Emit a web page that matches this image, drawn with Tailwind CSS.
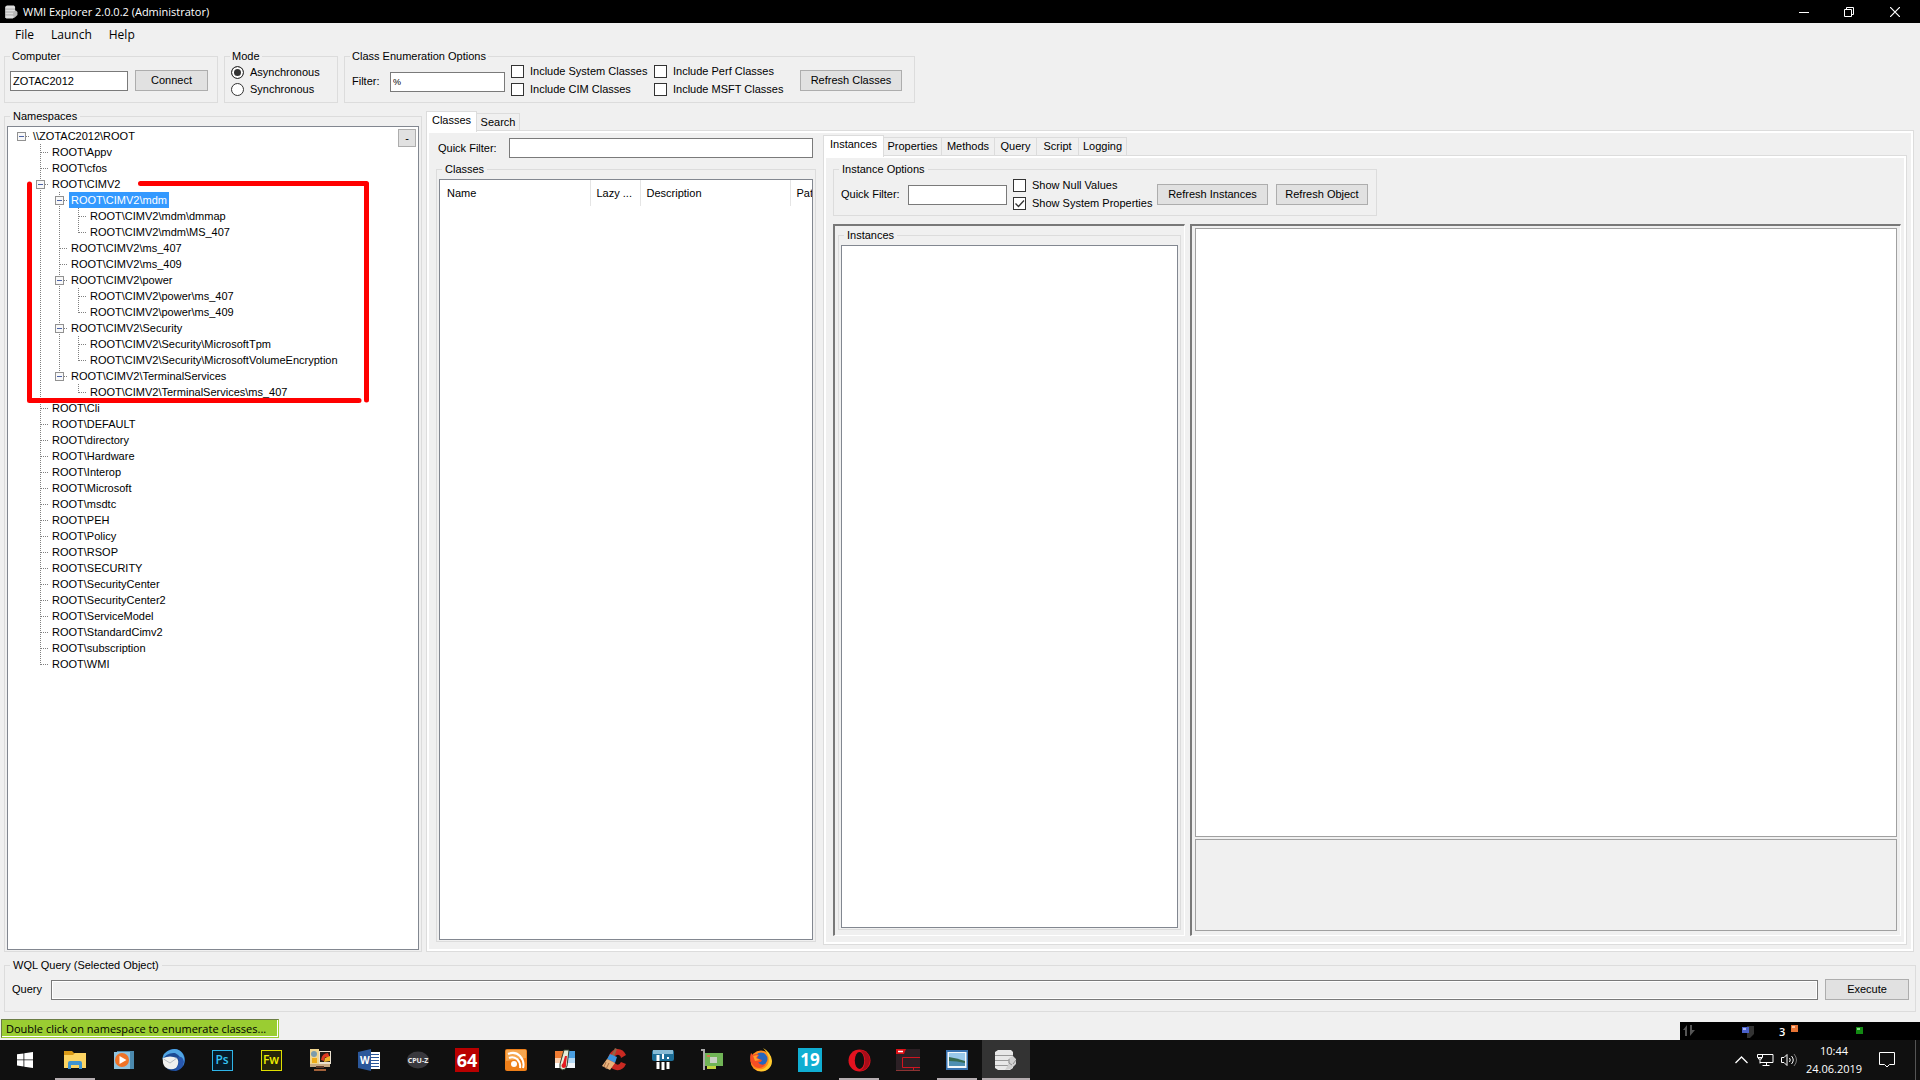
<!DOCTYPE html>
<html lang="en">

<head>
  <meta charset="UTF-8">
  <title>WMI Explorer 2.0.0.2 (Administrator)</title>
  <script src="https://cdn.jsdelivr.net/npm/@tailwindcss/browser@4"></script>
</head>

<body class="h-screen flex flex-col overflow-hidden bg-[#f0f0f0] text-black text-[11px] leading-[13px] font-['Liberation_Sans',sans-serif]">

  <!-- Title bar -->
  <header class="h-[23px] shrink-0 flex items-center bg-black text-white pl-1 font-['Open_Sans',sans-serif]">
    <svg class="w-[14px] h-[14px] mr-[5px]" viewBox="0 0 24 24">
      <path d="M2 3l3-2h12l2 2v17l-4 3H4l-2-2z" fill="#dedede" />
      <path d="M2 7h17M2 12h17M2 17h17" stroke="#888" stroke-width="1" />
      <path d="M16 12l4-3 3 3v5l-5 5-3-4z" fill="#b9b9b9" />
    </svg>
    <h1 class="text-[11px]">WMI Explorer 2.0.0.2 (Administrator)</h1>
    <div class="ml-auto flex h-full">
      <button class="w-[45px] flex items-center justify-center" aria-label="Minimize">
        <svg class="w-[10px] h-[10px]" viewBox="0 0 10 10"><path d="M0 5.5h10" stroke="#fff" /></svg>
      </button>
      <button class="w-[45px] flex items-center justify-center" aria-label="Restore">
        <svg class="w-[10px] h-[10px]" viewBox="0 0 10 10" fill="none" stroke="#fff"><path d="M.5 2.5h7v7h-7zM2.5 2V.5h7v7H8" /></svg>
      </button>
      <button class="w-[47px] mr-[2px] flex items-center justify-center" aria-label="Close">
        <svg class="w-[10px] h-[10px]" viewBox="0 0 10 10"><path d="M0 0l10 10M10 0L0 10" stroke="#fff" stroke-width="1.2" /></svg>
      </button>
    </div>
  </header>

  <!-- Menu -->
  <nav class="h-[27px] shrink-0 flex items-start pt-[5px] pl-[15px] gap-[17px] text-[12px] leading-[14px] font-['Open_Sans',sans-serif]">
    <button>File</button>
    <button>Launch</button>
    <button>Help</button>
  </nav>

  <!-- Connection options -->
  <div class="h-[53px] shrink-0 flex gap-[6px] px-1">
    <fieldset class="w-[214px] border border-[#dcdcdc] px-0.5 pb-px">
      <legend class="ml-[3px] px-0.5">Computer</legend>
      <div class="flex items-end gap-[7px] pt-[7px] pl-[3px]">
        <input type="text" value="ZOTAC2012" aria-label="Computer" class="w-[118px] h-5 border border-[#7a7a7a] bg-white px-0.5">
        <button class="w-[73px] h-[21px] border border-[#adadad] bg-[#e1e1e1]">Connect</button>
      </div>
    </fieldset>
    <fieldset class="w-[114px] border border-[#dcdcdc] px-0.5 pb-px">
      <legend class="ml-[3px] px-0.5">Mode</legend>
      <div class="flex flex-col pt-px pl-1">
        <label class="h-[17px] flex items-center gap-[6px]">
          <input type="radio" name="mode" checked class="appearance-none size-[13px] rounded-full border border-[#333] bg-white checked:bg-[#333] checked:shadow-[inset_0_0_0_2px_white]">Asynchronous
        </label>
        <label class="h-[17px] flex items-center gap-[6px]">
          <input type="radio" name="mode" class="appearance-none size-[13px] rounded-full border border-[#333] bg-white checked:bg-[#333]">Synchronous
        </label>
      </div>
    </fieldset>
    <fieldset class="w-[571px] border border-[#dcdcdc] px-0.5 pb-px">
      <legend class="ml-[3px] px-0.5">Class Enumeration Options</legend>
      <div class="flex items-start pl-[5px]">
        <label for="class-filter" class="w-[38px] mt-3">Filter:</label>
        <input type="text" id="class-filter" value="%" class="w-[115px] h-5 mt-[9px] border border-[#7a7a7a] bg-white px-0.5 text-[9px]">
        <div class="grid grid-cols-[143px_146px] gap-y-px ml-[6px] whitespace-nowrap">
          <label class="h-[17px] flex items-center gap-[6px]"><input type="checkbox" class="appearance-none size-[13px] border border-[#333] bg-white">Include System Classes</label>
          <label class="h-[17px] flex items-center gap-[6px]"><input type="checkbox" class="appearance-none size-[13px] border border-[#333] bg-white">Include Perf Classes</label>
          <label class="h-[17px] flex items-center gap-[6px]"><input type="checkbox" class="appearance-none size-[13px] border border-[#333] bg-white">Include CIM Classes</label>
          <label class="h-[17px] flex items-center gap-[6px]"><input type="checkbox" class="appearance-none size-[13px] border border-[#333] bg-white">Include MSFT Classes</label>
        </div>
        <button class="w-[102px] h-[21px] mt-[7px] border border-[#adadad] bg-[#e1e1e1]">Refresh Classes</button>
      </div>
    </fieldset>
  </div>

  <main class="flex-1 min-h-0 flex gap-1 mt-[7px] pl-1 pr-[6px]">

    <!-- Namespace tree -->
    <fieldset class="w-[418px] shrink-0 flex flex-col border border-[#dcdcdc] px-0.5 pb-px">
      <legend class="ml-[3px] px-[3px]">Namespaces</legend>
      <div class="relative flex-1 mt-[3px] border border-[#828790] bg-white pt-px pl-1">
        <ul id="tree"></ul>
        <button class="absolute right-[2px] top-[2px] size-[18px] border border-[#adadad] bg-[#e1e1e1]" aria-label="Collapse">-</button>
        <svg class="absolute left-0 top-0 w-[380px] h-[290px] pointer-events-none" viewBox="0 0 380 290" fill="none" stroke="#f00" stroke-width="5" stroke-linecap="round" stroke-linejoin="round">
          <path d="M21.5 57v216.500H351M132.500 56.500h226V273" />
        </svg>
      </div>
    </fieldset>

    <!-- Classes / Search -->
    <div class="flex-1 min-w-0 flex flex-col pt-px">
      <div class="h-[19px] shrink-0 flex items-end" role="tablist">
        <button class="relative w-[51px] h-[21px] -mb-[2px] pb-[3px] border border-b-0 border-[#dcdcdc] bg-white" role="tab">Classes</button>
        <button class="w-[43px] h-[17px] border border-l-0 border-b-0 border-[#dcdcdc]" role="tab">Search</button>
      </div>
      <div class="flex-1 min-h-0 flex gap-[7px] border border-[#dcdcdc] shadow-[inset_0_0_0_2px_white] pl-[9px] pr-[6px]">

        <section class="w-[380px] shrink-0 flex flex-col pt-[7px] pb-[9px]">
          <div class="flex items-center pl-0.5 pr-[3px]">
            <label for="quick-filter" class="w-[71px]">Quick Filter:</label>
            <input type="text" id="quick-filter" class="flex-1 min-w-0 h-5 border border-[#7a7a7a] bg-white px-0.5">
          </div>
          <fieldset class="flex-1 min-w-0 flex flex-col mt-[5px] border border-[#dcdcdc] px-0.5 pb-px">
            <legend class="ml-[3px] px-[3px]">Classes</legend>
            <div class="flex-1 mt-[3px] border border-[#828790] bg-white overflow-hidden">
              <table class="table-fixed w-[480px] text-left">
                <thead>
                  <tr class="h-[26px]">
                    <th class="w-[150px] border-r border-[#e5e5e5] pl-[7px] font-normal">Name</th>
                    <th class="w-[50px] border-r border-[#e5e5e5] pl-[6px] font-normal">Lazy ...</th>
                    <th class="w-[150px] border-r border-[#e5e5e5] pl-[6px] font-normal">Description</th>
                    <th class="pl-[6px] font-normal">Path</th>
                  </tr>
                </thead>
                <tbody></tbody>
              </table>
            </div>
          </fieldset>
        </section>

        <section class="flex-1 min-w-0 flex flex-col pt-1 pb-[6px]">
          <div class="h-5 shrink-0 flex items-end" role="tablist">
            <button class="relative w-[61px] h-[22px] -mb-[2px] pb-1 border border-b-0 border-[#dcdcdc] bg-white" role="tab">Instances</button>
            <button class="w-[58px] h-[18px] border border-l-0 border-b-0 border-[#dcdcdc]" role="tab">Properties</button>
            <button class="w-[53px] h-[18px] border border-l-0 border-b-0 border-[#dcdcdc]" role="tab">Methods</button>
            <button class="w-[42px] h-[18px] border border-l-0 border-b-0 border-[#dcdcdc]" role="tab">Query</button>
            <button class="w-[42px] h-[18px] border border-l-0 border-b-0 border-[#dcdcdc]" role="tab">Script</button>
            <button class="w-[48px] h-[18px] border border-l-0 border-b-0 border-[#dcdcdc]" role="tab">Logging</button>
          </div>
          <div class="flex-1 min-h-0 flex flex-col border border-[#dcdcdc] shadow-[inset_0_0_0_2px_white] pt-[7px] pb-2 pl-[9px] pr-[5px]">
            <fieldset class="w-[544px] h-[53px] shrink-0 border border-[#dcdcdc] px-0.5 pb-px">
              <legend class="ml-[3px] px-[3px]">Instance Options</legend>
              <div class="flex items-start pl-[5px]">
                <label for="instance-filter" class="w-[67px] mt-3">Quick Filter:</label>
                <input type="text" id="instance-filter" class="w-[99px] h-5 mt-[9px] border border-[#7a7a7a] bg-white px-0.5">
                <div class="w-[138px] flex flex-col gap-px mt-px ml-[6px] whitespace-nowrap">
                  <label class="h-[17px] flex items-center gap-[6px]"><input type="checkbox" class="appearance-none shrink-0 size-[13px] border border-[#333] bg-white">Show Null Values</label>
                  <label class="relative h-[17px] flex items-center gap-[6px]"><input type="checkbox" checked class="appearance-none shrink-0 size-[13px] border border-[#333] bg-white">Show System Properties
                    <svg class="absolute left-0 top-[2px] size-[13px] pointer-events-none" viewBox="0 0 13 13"><path d="M2.500 6.500l3 3L11 3.500" fill="none" stroke="#333" stroke-width="1.300" /></svg>
                  </label>
                </div>
                <button class="w-[111px] h-[21px] mt-2 ml-[6px] border border-[#adadad] bg-[#e1e1e1]">Refresh Instances</button>
                <button class="w-[92px] h-[21px] mt-2 ml-2 border border-[#adadad] bg-[#e1e1e1]">Refresh Object</button>
              </div>
            </fieldset>

            <div class="flex-1 min-h-0 flex gap-[5px] mt-2">
              <div class="w-[352px] shrink-0 flex flex-col border-t-2 border-l-2 border-r border-b border-t-[#787878] border-l-[#787878] border-r-white border-b-white pt-[3px] px-[3px] pb-[5px]">
                <fieldset class="flex-1 min-w-0 flex flex-col border border-[#dcdcdc] px-0.5 pb-px">
                  <legend class="ml-[3px] px-[3px]">Instances</legend>
                  <div class="flex-1 mt-[3px] border border-[#828790] bg-white"></div>
                </fieldset>
              </div>
              <div class="flex-1 flex flex-col gap-[2px] border-t-2 border-l-2 border-r border-b border-t-[#787878] border-l-[#787878] border-r-white border-b-white pt-[2px] px-[3px] pb-[4px]">
                <div class="flex-1 border border-[#a0a0a0] bg-white"></div>
                <div class="h-[92px] border border-[#a0a0a0]"></div>
              </div>
            </div>
          </div>
        </section>
      </div>
    </div>
  </main>

  <!-- WQL query -->
  <div class="mt-[7px] px-1 shrink-0">
    <fieldset class="h-[53px] border border-[#dcdcdc] px-0.5 pb-px">
      <legend class="ml-[3px] px-[3px]">WQL Query (Selected Object)</legend>
      <div class="flex items-end pt-[7px] pl-[5px] pr-1">
        <label for="wql-query" class="w-[39px] h-[17px]">Query</label>
        <input type="text" id="wql-query" readonly class="flex-1 h-5 border border-[#7a7a7a] bg-[#f0f0f0] shadow-[inset_0_0_0_1px_white] px-0.5">
        <button class="w-[84px] h-[21px] ml-[7px] border border-[#adadad] bg-[#e1e1e1]">Execute</button>
      </div>
    </fieldset>
  </div>

  <!-- Status line -->
  <div class="h-[28px] shrink-0 flex items-end justify-between pl-px">
    <p class="w-[278px] h-[19px] mb-[2px] bg-[#9acd32] border border-t-[#6b7d45] border-l-[#6b7d45] border-r-[#9acd32] border-b-[#9acd32] shadow-[inset_-1px_-1px_0_white] px-1 text-[11px] leading-[17px] whitespace-nowrap font-['Open_Sans',sans-serif]">Double click on namespace to enumerate classes...</p>
    <div class="relative w-[240px] h-[18px] bg-black">
      <svg class="w-[240px] h-[18px]" viewBox="0 0 240 18">
        <path d="M3 8l4-5v11H5V8zM10 3v11l5-6h-3V3z" fill="#555" />
        <path d="M67 4h7v8l-4 4h-3z" fill="#333" />
        <path d="M62 5h7v6h-7z" fill="#4b62cc" /><path d="M63 6h3v2h-3z" fill="#a9b6f5" />
        <path d="M111 3h7v7h-7z" fill="#e87434" /><path d="M112 4h3v2h-3z" fill="#ffc49c" />
        <path d="M176 5h7v7h-7z" fill="#138a13" /><path d="M177 6h3v2h-3z" fill="#7fdc7f" />
      </svg>
      <span class="absolute left-[99px] top-[3px] text-white text-[11px] leading-[13px] font-semibold font-['Open_Sans',sans-serif]">3</span>
    </div>
  </div>

  <!-- Taskbar -->
  <footer class="h-10 shrink-0 flex bg-[#101010] text-white font-['Open_Sans',sans-serif]">
    <div class="flex gap-px">
      <button class="w-[50px] flex items-center justify-center" aria-label="Start">
        <svg class="w-4 h-4" viewBox="0 0 16 16" fill="#fff"><path d="M0 2.300l6.500-.9v6.100H0zM7.300 1.300L16 0v7.500H7.300zM0 8.300h6.500v6.200L0 13.600zM7.300 8.300H16V16l-8.700-1.300z" /></svg>
      </button>
      <button class="w-12 flex items-center justify-center relative" aria-label="File Explorer">
        <svg class="w-[22px] h-[20px]" viewBox="0 0 22 20"><path d="M0 1h8l2 2h11v8H0z" fill="#d99a17" /><path d="M0 5h9l2-2h11v15H0z" fill="#fcd462" /><path d="M4 19v-6q0-2 2-2h10q2 0 2 2v6h-3v-4H7v4z" fill="#3f94d1" /></svg>
        <span class="absolute left-1 bottom-0 w-10 h-[2px] bg-[#b5adb0]"></span>
      </button>
      <button class="w-12 flex items-center justify-center" aria-label="Media player">
        <svg class="w-[20px] h-[20px]" viewBox="0 0 20 20"><path d="M3 1h17v18H3z" fill="#4b89ad" /><path d="M0 2h16v17H0z" fill="#8fc3df" /><circle cx="8" cy="10" r="7" fill="#ef7327" /><path d="M5.500 6v8l7-4z" fill="#fff" /></svg>
      </button>
      <button class="w-12 flex items-center justify-center" aria-label="Thunderbird">
        <svg class="w-6 h-6" viewBox="0 0 24 24"><circle cx="13" cy="12" r="11" fill="#1b4a94" /><path d="M1 12Q2 4 9 2q8-3 13 4 3 6 0 12-1-10-8-13Q6 4 1 12z" fill="#50a5e3" /><path d="M2 10q7-3 14 0 3 5-1 10-6 3-11-1-3-4-2-9z" fill="#f1f1ef" /><path d="M2.500 11l6.500 4 7-5" fill="none" stroke="#b6bdc4" /><path d="M17 9q3 7-4 14 9-1 10-9-1-6-6-5z" fill="#2857ae" /></svg>
      </button>
      <button class="w-12 flex items-center justify-center" aria-label="Photoshop">
        <span class="w-[21px] h-[21px] border border-[#2fb5e8] bg-[#071a28] text-[#35c3f5] text-[12px] leading-[18px] font-semibold">Ps</span>
      </button>
      <button class="w-12 flex items-center justify-center" aria-label="Fireworks">
        <span class="w-[21px] h-[21px] border border-[#dfdf00] bg-[#26260a] text-[#f0f000] text-[12px] leading-[18px] font-semibold flex justify-center">Fw</span>
      </button>
      <button class="w-12 flex items-center justify-center" aria-label="Display tool">
        <svg class="w-[22px] h-[24px]" viewBox="0 0 22 24"><path d="M10 3h12v13H10z" fill="#e9e1d0" /><path d="M11 4h10v10H11z" fill="#201c18" /><path d="M12 12q1-7 7-7l2 5-5-1-1 4z" fill="#dd3a20" /><path d="M16 10l5-2v5l-6 1z" fill="#efb42b" /><path d="M1 1h9v15H1z" fill="#f0d58f" /><circle cx="5" cy="6" r="3" fill="#7c9cac" /><path d="M3 10h5v5H3z" fill="#efac18" /><path d="M1 16h20v3H1z" fill="#c8aa83" /><path d="M7 18h8v2H7z" fill="#5c3a2a" /><path d="M5 21h12v2H5z" fill="#a4623a" /></svg>
      </button>
      <button class="w-12 flex items-center justify-center" aria-label="Word">
        <svg class="w-[23px] h-[22px]" viewBox="0 0 23 22"><path d="M11 3h11v17H11z" fill="#fff" /><path d="M13 5.500h8M13 8.500h8M13 11.500h8M13 14.500h8M13 17.500h8" stroke="#2b579a" /><path d="M0 3l13-3v22L0 19z" fill="#2b579a" /><text x="2" y="15" font-size="10" font-weight="700" fill="#fff">W</text></svg>
      </button>
      <button class="w-12 flex items-center justify-center" aria-label="CPU-Z">
        <svg class="w-[24px] h-[18px]" viewBox="0 0 24 18"><ellipse cx="12" cy="9" rx="11" ry="8.500" fill="#39383d" /><text x="12" y="11.500" text-anchor="middle" font-size="7" font-weight="700" fill="#eee">CPU-Z</text></svg>
      </button>
      <button class="w-12 flex items-center justify-center" aria-label="AIDA64">
        <span class="size-6 flex justify-center bg-[#b90000] text-[18px] leading-6 font-bold">64</span>
      </button>
      <button class="w-12 flex items-center justify-center" aria-label="Feed reader">
        <svg class="w-[22px] h-[22px]" viewBox="0 0 22 22"><rect width="22" height="22" rx="2" fill="#ee7f19" /><path d="M1 1h20v8L1 12z" fill="#f5a64f" /><circle cx="9" cy="15" r="3" fill="#fff" /><path d="M4 9q4-2 8 1 4 4 3 9M3 5q7-3 12 2 5 6 3 12" fill="none" stroke="#fff" stroke-width="2" /></svg>
      </button>
      <button class="w-12 flex items-center justify-center" aria-label="Core Temp">
        <svg class="w-[20px] h-[22px]" viewBox="0 0 20 22"><path d="M0 2h9v17H0z" fill="#f07c33" /><path d="M0 9h9v6H0z" fill="#fbcfae" /><path d="M0 14h9v5H0z" fill="#fff" /><path d="M10 2h10v17H10z" fill="#4a9fe2" /><path d="M10 9h10v5H10z" fill="#b4d8f4" /><path d="M10 14h10v5H10z" fill="#f2f5fa" /><path d="M9 1h5l-2 16q-1 4-5 4-3-2-2-6z" fill="#e7eed8" stroke="#35402e" /><path d="M10 7h2l-1 8q1 4-3 4-3-2 0-5z" fill="#e61b22" /></svg>
      </button>
      <button class="w-12 flex items-center justify-center" aria-label="CCleaner">
        <svg class="w-[25px] h-[24px]" viewBox="0 0 25 24"><path d="M24 7q-3-7-10-6-8 3-8 11t8 10q7 1 10-6l-5-2q-2 4-5 2-3-2-2-6 2-4 5-3 2 1 2 3z" fill="#c92a22" /><path d="M13 0l2 1-3 8-3-1z" fill="#936447" /><path d="M8 6l7 3-2 6-8-4z" fill="#3b94dc" /><path d="M5 11l8 4-5 7-8-4z" fill="#e9b37b" /><path d="M4 14l-2 5M7 15l-3 6" stroke="#ad7146" /></svg>
      </button>
      <button class="w-12 flex items-center justify-center" aria-label="Monitor">
        <svg class="w-[22px] h-[22px]" viewBox="0 0 22 22"><rect y="1" width="22" height="11" rx="2" fill="#1d6e97" /><path d="M1 1h20v4H1z" fill="#86bbd5" /><path d="M6 6v14M11 12v9M16 12v8" stroke="#fff" stroke-width="3" /><path d="M16 8v2M11 5v5" stroke="#fff" stroke-width="2" /><path d="M1 12.500h20" stroke="#101010" /></svg>
      </button>
      <button class="w-12 flex items-center justify-center" aria-label="GPU">
        <svg class="w-[24px] h-[22px]" viewBox="0 0 24 22"><path d="M1 1h3v20" fill="none" stroke="#aaa" stroke-width="2" /><path d="M5 4h18v13H5z" fill="#70b456" /><path d="M7 17h9v3H7z" fill="#bfd340" /><path d="M10 8h7v6h-7z" fill="#c8d0c4" /><path d="M7 6h3v2H7z" fill="#d8754e" /></svg>
      </button>
      <button class="w-12 flex items-center justify-center" aria-label="Firefox">
        <svg class="w-[24px] h-[24px]" viewBox="0 0 24 24"><circle cx="12" cy="13" r="10.500" fill="#ff8d1d" /><path d="M14 0q8 4 9 13 0 6-5 9-7 3-12-1 10 2 13-5 3-8-5-16z" fill="#ffcb2e" /><circle cx="12" cy="11" r="6.500" fill="#2766bd" /><path d="M2 5l2 2q3-2 6 0l-2 3 5 2q-1 3-4 2 2 4 8 2-4 6-11 3Q-1 14 2 5z" fill="#f64e24" /><path d="M3 5l1 3 5-1-2 3 4 2-5 1z" fill="#ff9e2a" /></svg>
      </button>
      <button class="w-12 flex items-center justify-center" aria-label="Calendar">
        <span class="size-6 flex justify-center bg-[#10aed2] text-[17px] leading-6 font-bold">19</span>
      </button>
      <button class="w-12 flex items-center justify-center relative" aria-label="Opera">
        <svg class="w-[23px] h-[23px]" viewBox="0 0 23 23"><circle cx="11.500" cy="11.500" r="11" fill="#e4121f" /><path d="M12 1q9 1 10 10-1 10-10 11 5-3 5-10T12 1z" fill="#a70d19" /><ellipse cx="11.500" cy="11.500" rx="4.700" ry="8.500" fill="#101010" /></svg>
        <span class="absolute left-1 bottom-0 w-10 h-[2px] bg-[#b5adb0]"></span>
      </button>
      <button class="w-12 flex items-center justify-center" aria-label="Monitoring">
        <svg class="w-6 h-6" viewBox="0 0 24 24"><path d="M0 1h24v22H0z" fill="#2c2025" /><path d="M0 1h10l-2 5H0z" fill="#dd1016" /><path d="M2 3.500h5" stroke="#fff" stroke-width="1.500" /><path d="M6.500 9.500H24M6.500 9.500v10H24M14 22.500h7M17.500 20v3" fill="none" stroke="#d01520" /><path d="M0 22.500h24" stroke="#8b3434" /></svg>
      </button>
      <button class="w-12 flex items-center justify-center relative" aria-label="Image viewer">
        <svg class="w-[22px] h-[20px]" viewBox="0 0 22 20"><path d="M0 0h22v20H0z" fill="#3973b0" /><path d="M1.500 2h19v16h-19z" fill="#f4f8fa" /><path d="M3 3h16v13H3z" fill="#99c9ea" /><path d="M3 7q7 1 16 4v2H3z" fill="#376b50" /><path d="M3 11q8 0 16 2v3H3z" fill="#4e8fb2" /></svg>
        <span class="absolute left-1 bottom-0 w-10 h-[2px] bg-[#b5adb0]"></span>
      </button>
      <button class="w-12 flex items-center justify-center relative bg-[#333]" aria-label="WMI Explorer">
        <svg class="w-[22px] h-[22px]" viewBox="0 0 22 22"><path d="M0 3l3-2h13l2 2v16l-3 2H3l-3-2z" fill="#e8e8e8" /><path d="M0 6.500h18M0 11.500h18M0 16.500h15" stroke="#999" /><path d="M14 9l4-2 3 3v5l-5 5-6 1 3-5z" fill="#cfcfcf" /><path d="M14 10v4l3 2M21 11l-3 4" stroke="#8b8b8b" fill="none" /></svg>
        <span class="absolute inset-x-0 bottom-0 h-[2px] bg-[#b5adb0]"></span>
      </button>
    </div>

    <!-- Notification area -->
    <div class="ml-auto flex items-center">
      <button class="w-[24px] flex justify-center" aria-label="Show hidden icons"><svg class="w-[13px] h-[8px]" viewBox="0 0 13 8"><path d="M.5 7l6-6 6 6" fill="none" stroke="#fff" stroke-width="1.300" /></svg></button>
      <button class="w-[24px] flex justify-center" aria-label="Network"><svg class="w-[17px] h-[14px]" viewBox="0 0 17 14" fill="none" stroke="#fff"><path d="M.5 1.500h5v3h-5zM1.500 4v2h3V4M3 6v4.500M5 1.500h11v8H3M9.500 10v3M5.500 12.500h7" /></svg></button>
      <button class="w-[24px] flex justify-center" aria-label="Volume"><svg class="w-[17px] h-[14px]" viewBox="0 0 17 14" fill="none" stroke="#fff"><path d="M.5 4.500H3l3-3v11l-3-3H.5zM8.500 5q1.500 2 0 4M10.500 3q3.500 4 0 8" /><path d="M13 1q5 6 0 12" stroke="#777" /></svg></button>
      <div class="w-[66px] text-center text-[11px] leading-[18px]">
        <p>10:44</p>
        <p>24.06.2019</p>
      </div>
      <button class="w-[40px] flex justify-center" aria-label="Notifications"><svg class="w-4 h-4" viewBox="0 0 16 16"><path d="M.5.500h15v12h-5L8 15l-2.500-2.500h-5z" fill="none" stroke="#fff" /></svg></button>
      <span class="w-px h-10 ml-2 mr-1 bg-[#555]"></span>
    </div>
  </footer>

  <script>
    // [depth, name, expanded]
    const nodes = [
      [0, '\\\\ZOTAC2012\\ROOT', true],
      [1, 'ROOT\\Appv'],
      [1, 'ROOT\\cfos'],
      [1, 'ROOT\\CIMV2', true],
      [2, 'ROOT\\CIMV2\\mdm', true],
      [3, 'ROOT\\CIMV2\\mdm\\dmmap'],
      [3, 'ROOT\\CIMV2\\mdm\\MS_407'],
      [2, 'ROOT\\CIMV2\\ms_407'],
      [2, 'ROOT\\CIMV2\\ms_409'],
      [2, 'ROOT\\CIMV2\\power', true],
      [3, 'ROOT\\CIMV2\\power\\ms_407'],
      [3, 'ROOT\\CIMV2\\power\\ms_409'],
      [2, 'ROOT\\CIMV2\\Security', true],
      [3, 'ROOT\\CIMV2\\Security\\MicrosoftTpm'],
      [3, 'ROOT\\CIMV2\\Security\\MicrosoftVolumeEncryption'],
      [2, 'ROOT\\CIMV2\\TerminalServices', true],
      [3, 'ROOT\\CIMV2\\TerminalServices\\ms_407'],
      ...['Cli', 'DEFAULT', 'directory', 'Hardware', 'Interop', 'Microsoft', 'msdtc', 'PEH', 'Policy', 'RSOP', 'SECURITY', 'SecurityCenter',
        'SecurityCenter2', 'ServiceModel', 'StandardCimv2', 'subscription', 'WMI'].map(n => [1, 'ROOT\\' + n])
    ];
    const selected = 'ROOT\\CIMV2\\mdm';

    // is there a later sibling at this depth?
    function continues(i, depth) {
      for (let j = i + 1; j < nodes.length; j++) {
        if (nodes[j][0] < depth) return false;
        if (nodes[j][0] === depth) return true;
      }
      return false;
    }

    function cell(i, col) {
      const [depth, , expanded] = nodes[i];
      const more = continues(i, col);
      let lines = '';
      if (col < depth) {
        if (more) lines = 'M9.5 0v16';
      } else {
        lines = 'M10 8.500h8' + (col > 0 ? (more ? 'M9.5 0v16' : 'M9.5 0v9') : '');
      }
      const box = col === depth && expanded
        ? '<rect x="5.500" y="4.500" width="8" height="8" fill="#f8f8f8" stroke="#919191"/><path d="M7 8.500h5" stroke="#4b63a7"/>' : '';
      return `<svg class="w-[19px] h-4 shrink-0" viewBox="0 0 19 16"><path d="${lines}" stroke="#808080" stroke-dasharray="1 1"/>${box}</svg>`;
    }

    document.getElementById('tree').innerHTML = nodes.map(([depth, name], i) => {
      let cells = '';
      for (let c = 0; c <= depth; c++) cells += cell(i, c);
      const color = name === selected ? 'bg-[#3399ff] text-white' : '';
      return `<li class="h-4 flex">${cells}<span class="px-[2px] leading-4 whitespace-nowrap ${color}">${name}</span></li>`;
    }).join('');
  </script>
</body>

</html>
